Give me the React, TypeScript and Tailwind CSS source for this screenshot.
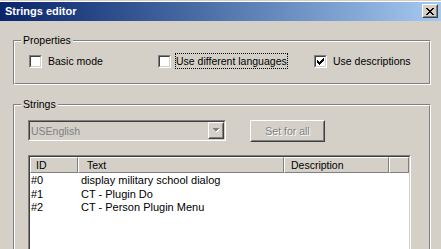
import React from "react";

const sunkenOuter = "border border-t-[#808080] border-l-[#808080] border-r-white border-b-white";
const sunkenInner = "border border-t-[#404040] border-l-[#404040] border-r-[#d4d0c8] border-b-[#d4d0c8]";
const raisedOuter = "border border-t-white border-l-white border-r-[#404040] border-b-[#404040]";
const raisedInner = "border border-t-[#d4d0c8] border-l-[#d4d0c8] border-r-[#808080] border-b-[#808080]";

function Pixels({ rows, color, w, h, className }: { rows: string[]; color: string; w: number; h: number; className?: string }) {
  const rects: React.ReactNode[] = [];
  rows.forEach((r, y) => {
    for (let x = 0; x < r.length; x++) {
      if (r[x] === "X") rects.push(<rect key={`${x}-${y}`} x={x} y={y} width={1} height={1} fill={color} />);
    }
  });
  return (
    <svg width={w} height={h} viewBox={`0 0 ${w} ${h}`} shapeRendering="crispEdges" className={className}>
      {rects}
    </svg>
  );
}

const checkRows = [
  ".......",
  "......X",
  ".....XX",
  "X...XXX",
  "XX.XXX.",
  "XXXXX..",
  ".XXX...",
  "..X....",
];

const closeRows = [
  "XX....XX",
  ".XX..XX.",
  "..XXXX..",
  "...XX...",
  "..XXXX..",
  ".XX..XX.",
  "XX....XX",
];

function Check({ checked }: { checked?: boolean }) {
  return (
    <div className={`w-[13px] h-[13px] shrink-0 ${sunkenOuter}`}>
      <div className={`w-full h-full bg-white flex items-start justify-start ${sunkenInner}`}>
        {checked && <Pixels rows={checkRows} color="#000" w={7} h={8} className="ml-[1px]" />}
      </div>
    </div>
  );
}

function GroupBox({ label, labelWidth, className, children }: { label: string; labelWidth?: string; className?: string; children: React.ReactNode }) {
  return (
    <div className={`relative ${sunkenOuter.replace("border ", "border ")} ${className ?? ""}`}>
      <div className="w-full h-full border border-t-white border-l-white border-r-[#808080] border-b-[#808080]">
        {children}
      </div>
      <div className="absolute left-[7px] top-[-8px] px-[2px] bg-[#d4d0c8] leading-[14px] text-[10.5px] text-black">
        {label}
      </div>
    </div>
  );
}

export default function App() {
  return (
    <div className="w-[441px] h-[249px] overflow-hidden bg-[#d4d0c8] font-['Liberation_Sans',Arial,sans-serif] text-black select-none">
      <div className="h-[1px] bg-[#d4d0c8]" />
      <div className="h-[1px] bg-white" />
      {/* Title bar */}
      <div className="h-[19px] flex items-start justify-between bg-gradient-to-r from-[#0a246a] to-[#a6caf0] pl-[5px] pr-[3px]">
        <div className="text-white font-bold text-[11px] leading-[19px]">Strings editor</div>
        <div className={`mt-[2px] w-[16px] h-[14px] bg-[#d4d0c8] ${raisedOuter}`}>
          <div className={`w-full h-full flex items-start justify-start ${raisedInner}`}>
            <Pixels rows={closeRows} color="#000" w={8} h={7} className="ml-[2px] mt-[2px]" />
          </div>
        </div>
      </div>

      {/* Properties */}
      <div className="pt-[19px] pl-[13px]">
        <GroupBox label="Properties" className="w-[418px] h-[45px]">
          <div className="pt-[11px] pl-[14px] flex items-center text-[10.5px] leading-[14px]">
            <div className="w-[129px] flex items-center">
              <Check />
              <span className="ml-[4px] border border-transparent px-[1px] leading-[14px]">Basic mode</span>
            </div>
            <div className="w-[156px] flex items-center">
              <Check />
              <span className="ml-[4px] border border-dotted border-black px-[0px] leading-[14px]">Use different languages</span>
            </div>
            <div className="flex items-center">
              <Check checked />
              <span className="ml-[4px] border border-transparent px-[1px] leading-[14px]">Use descriptions</span>
            </div>
          </div>
        </GroupBox>
      </div>

      {/* Strings */}
      <div className="pt-[19px] pl-[13px]">
        <GroupBox label="Strings" className="w-[418px] h-[160px]">
          <div className="pt-[14px] pl-[13px]">
            <div className="flex items-start">
              {/* Combo */}
              <div className={`w-[198px] h-[21px] ${sunkenOuter}`}>
                <div className={`w-full h-full flex items-center justify-between bg-[#d4d0c8] ${sunkenInner}`}>
                  <span className="pl-[1px] text-[10.5px] text-[#808080] leading-[14px]">USEnglish</span>
                  <div className={`w-[16px] h-[17px] bg-[#d4d0c8] ${raisedOuter}`}>
                    <div className={`w-full h-full flex items-center justify-center ${raisedInner}`}>
                      <svg width="8" height="5" viewBox="0 0 8 5" shapeRendering="crispEdges">
                        <polygon points="1,1 8,1 4.5,4.5" fill="#ffffff" />
                        <polygon points="0,0 7,0 3.5,3.5" fill="#808080" />
                      </svg>
                    </div>
                  </div>
                </div>
              </div>
              {/* Button */}
              <div className={`ml-[24px] w-[75px] h-[22px] bg-[#d4d0c8] ${raisedOuter}`}>
                <div className={`w-full h-full flex items-center justify-center ${raisedInner}`}>
                  <span className="text-[10.5px] leading-[14px] text-[#808080] [text-shadow:1px_1px_0_#ffffff]">Set for all</span>
                </div>
              </div>
            </div>

            {/* List view */}
            <div className={`mt-[13px] w-[383px] h-[120px] ${sunkenOuter}`}>
              <div className={`w-full h-full flex flex-col bg-white ${sunkenInner}`}>
                <div className="flex h-[16px] text-[10.5px] leading-[14px] shrink-0">
                  {[
                    { t: "ID", w: "w-[48px]", pl: "pl-[5px]" },
                    { t: "Text", w: "w-[206px]", pl: "pl-[8px]" },
                    { t: "Description", w: "w-[105px]", pl: "pl-[6px]" },
                    { t: "", w: "flex-1", pl: "" },
                  ].map((c, i) => (
                    <div key={i} className={`${c.w} h-full bg-[#d4d0c8] border border-t-white border-l-white border-r-[#808080] border-b-[#808080] ${c.pl} overflow-hidden whitespace-nowrap`}>
                      {c.t}
                    </div>
                  ))}
                </div>
                <div className="pt-[1px] text-[11px] leading-[13.5px]">
                  {[
                    ["#0", "display military school dialog"],
                    ["#1", "CT - Plugin Do"],
                    ["#2", "CT - Person Plugin Menu"],
                  ].map(([id, text]) => (
                    <div key={id} className="flex h-[13.5px] items-center">
                      <div className="w-[48px] pl-[1px]">{id}</div>
                      <div className="pl-[3px] whitespace-nowrap">{text}</div>
                    </div>
                  ))}
                </div>
              </div>
            </div>
          </div>
        </GroupBox>
      </div>
    </div>
  );
}
